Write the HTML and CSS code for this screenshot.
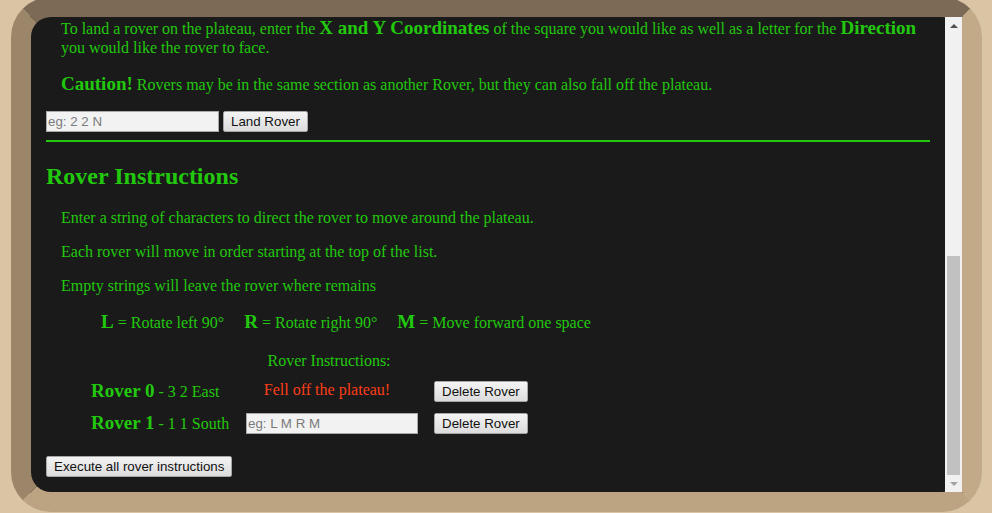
FILE: index.html
```html
<!DOCTYPE html>
<html lang="en">
<head>
<meta charset="utf-8">
<title>Mars Rover</title>
<link rel="stylesheet" href="styles.css">
</head>
<body>
<div class="frame">
  <main class="content">
    <p class="intro first">To land a rover on the plateau, enter the <b class="em">X and Y Coordinates</b> of the square you would like as well as a letter for the <b class="em">Direction</b> you would like the rover to face.</p>
    <p class="intro"><b class="em">Caution!</b> Rovers may be in the same section as another Rover, but they can also fall off the plateau.</p>
    <form class="land">
      <input class="field field-land" type="text" placeholder="eg: 2 2 N">
      <button type="button" class="btn">Land Rover</button>
    </form>
    <hr class="divider">
    <h2 class="title">Rover Instructions</h2>
    <p class="intro">Enter a string of characters to direct the rover to move around the plateau.</p>
    <p class="intro">Each rover will move in order starting at the top of the list.</p>
    <p class="intro">Empty strings will leave the rover where remains</p>
    <div class="legend">
      <span><b class="em">L</b> = Rotate left 90°</span>
      <span><b class="em">R</b> = Rotate right 90°</span>
      <span><b class="em">M</b> = Move forward one space</span>
    </div>
    <div class="rovers">
      <div></div>
      <div class="col-head">Rover Instructions:</div>
      <div></div>

      <div class="rover-name"><b class="em">Rover 0</b> - 3 2 East</div>
      <div class="status">Fell off the plateau!</div>
      <div><button type="button" class="btn">Delete Rover</button></div>

      <div class="rover-name"><b class="em">Rover 1</b> - 1 1 South</div>
      <div><input class="field field-cmd" type="text" placeholder="eg: L M R M"></div>
      <div><button type="button" class="btn">Delete Rover</button></div>
    </div>
    <button type="button" class="btn">Execute all rover instructions</button>
  </main>
  <aside class="scrollbar">
    <div class="sb-btn"><span class="arrow-up"></span></div>
    <div class="sb-track"><div class="sb-thumb"></div></div>
    <div class="sb-btn"><span class="arrow-down"></span></div>
  </aside>
</div>
</body>
</html>
```

FILE: styles.css
```css
html, body {
  margin: 0;
  height: 513px;
  overflow: hidden;
}

body {
  background: #d9c4a3;
  font-family: "Liberation Serif", "Times New Roman", serif;
  font-size: 16px;
  color: #22c80e;
}

.frame {
  box-sizing: border-box;
  height: 515px;
  margin: -3px 10px 0 11px;
  border: 20px solid;
  border-color: #7c6a57 #c2aa88 #bca482 #9c8669;
  border-radius: 40px;
  background: #1a1a1a;
  display: flex;
}

.content {
  flex: 1;
  min-width: 0;
  padding: 0 15px;
}

.intro {
  margin: 16px 0 16px 15px;
}

.intro.first {
  margin-top: 0;
}

.em {
  font-size: 19px;
}

.land {
  display: flex;
  gap: 4px;
  margin: 0;
}

.field {
  box-sizing: border-box;
  height: 21px;
  margin: 0;
  padding: 1px 1px;
  border: 1px solid #a9a9a9;
  background: #f2f2f2;
  font-family: "Liberation Sans", Arial, sans-serif;
  font-size: 13.333px;
  color: #000;
}

.field::placeholder {
  color: #7a7a7a;
}

.field-land {
  width: 173px;
}

.field-cmd {
  width: 172px;
}

.btn {
  box-sizing: border-box;
  height: 21px;
  margin: 0;
  padding: 1px 7px;
  border: 1px solid #a6a6a6;
  border-radius: 2px;
  background: linear-gradient(#f4f4f4, #dcdcdc);
  font-family: "Liberation Sans", Arial, sans-serif;
  font-size: 13.333px;
  color: #111;
}

.divider {
  margin: 8px 0;
  border: 0;
  height: 2px;
  background: #22c80e;
}

.title {
  margin: 20px 0 19px;
  font-size: 24px;
  line-height: 28px;
}

.legend {
  display: flex;
  align-items: baseline;
  gap: 20px;
  margin: 16px 0 16px 55px;
}

.rovers {
  display: grid;
  grid-template-columns: 139px 172px auto;
  column-gap: 16px;
  row-gap: 11px;
  align-items: center;
  margin: 19px 0 22px 45px;
}

.col-head {
  text-align: center;
  line-height: 18px;
  padding-right: 6px;
}

.status {
  text-align: center;
  color: #ff3d16;
  margin-top: -3px;
  padding-right: 10px;
  line-height: 20px;
}

.rover-name {
  white-space: nowrap;
  line-height: 20px;
}

.scrollbar {
  width: 17px;
  background: #f1f1f1;
  display: flex;
  flex-direction: column;
}

.sb-btn {
  height: 17px;
  display: flex;
  align-items: center;
  justify-content: center;
}

.arrow-up {
  width: 0;
  height: 0;
  border-left: 4px solid transparent;
  border-right: 4px solid transparent;
  border-bottom: 4px solid #505050;
}

.arrow-down {
  width: 0;
  height: 0;
  border-left: 4px solid transparent;
  border-right: 4px solid transparent;
  border-top: 4px solid #a3a3a3;
}

.sb-track {
  flex: 1;
  display: flex;
  flex-direction: column;
  justify-content: flex-end;
  padding: 0 2px;
}

.sb-thumb {
  height: 219px;
  background: #c1c1c1;
}
```
